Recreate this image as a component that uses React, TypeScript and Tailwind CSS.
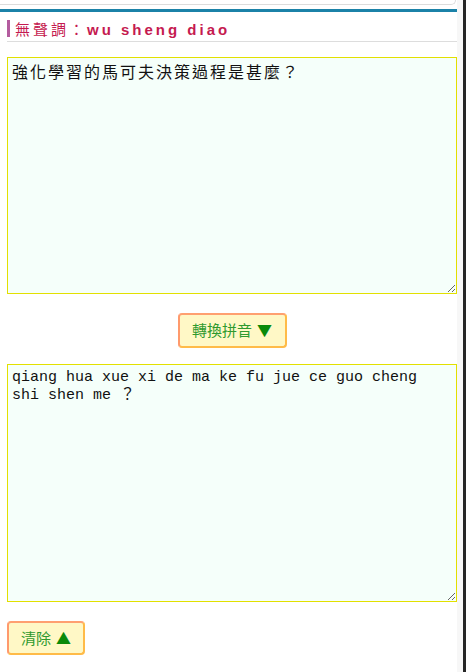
import { useState } from 'react';

const CJK = '"Noto Sans CJK TC", "Noto Sans", sans-serif';

export default function App() {
  const [source, setSource] = useState('強化學習的馬可夫決策過程是甚麼？');
  const [pinyin, setPinyin] = useState('qiang hua xue xi de ma ke fu jue ce guo cheng shi shen me ？');

  return (
    <div className="w-[466px] h-[672px] flex bg-white overflow-hidden">
      <div className="w-[457px] flex flex-col">
        {/* end of the panel above */}
        <div className="h-[5px] w-[456px] border-b border-r border-[#dcdcdc] rounded-br-[6px]" />
        <div className="mt-[4px] h-[3px] bg-[#1b82a8]" />

        <div className="pl-[7px] flex flex-col items-start">
          <div className="mt-[8px] w-[450px] border-b border-[#dddddd] pb-[4px]">
            <div
              className="border-l-[3px] border-[#b45c9f] pl-[5px] h-[17px] leading-[17px] text-[15px] tracking-[3px] text-[#c51a50] whitespace-nowrap"
              style={{ fontFamily: CJK }}
            >
              無聲調：
              <span className="font-bold" style={{ fontFamily: '"Liberation Sans", Arial, sans-serif' }}>
                wu sheng diao
              </span>
            </div>
          </div>

          <textarea
            value={source}
            onChange={(e) => setSource(e.target.value)}
            className="mt-[15px] w-[450px] h-[237px] border border-[#e2e000] bg-[#f5fffa] px-[4px] pt-[4px] text-[16px] leading-[18px] tracking-[2px] text-[#111] outline-none"
            style={{ fontFamily: CJK }}
          />

          <div className="w-[450px] flex justify-center mt-[19px]">
            <button
              className="h-[35px] w-[109px] rounded-[4px] border-2 border-t-[#ffa070] border-l-[#ff9a6c] border-r-[#ffbb48] border-b-[#ffbb48] bg-[#fff8c6] text-[15px] text-[#2f9a2f] flex items-center justify-center"
              style={{ fontFamily: CJK }}
            >
              轉換拼音 <span className="ml-[5px] text-[#0a8a0a]">▼</span>
            </button>
          </div>

          <textarea
            value={pinyin}
            onChange={(e) => setPinyin(e.target.value)}
            className="mt-[16px] w-[450px] h-[238px] border border-[#e2e000] bg-[#f5fffa] px-[4px] pt-[4px] text-[15px] leading-[18px] text-[#111] outline-none"
            style={{ fontFamily: '"Liberation Mono", "Noto Sans CJK TC", monospace' }}
          />

          <button
            onClick={() => setPinyin('')}
            className="mt-[19px] h-[34px] w-[78px] rounded-[4px] border-2 border-t-[#ffa070] border-l-[#ff9a6c] border-r-[#ffbb48] border-b-[#ffbb48] bg-[#fff8c6] text-[15px] text-[#2f9a2f] flex items-center justify-center"
            style={{ fontFamily: CJK }}
          >
            清除 <span className="ml-[5px] text-[#0a8a0a]">▲</span>
          </button>
        </div>
      </div>
      <div className="w-[6px] bg-[#f7f7f7]" />
      <div className="w-[3px] bg-[#262626]" />
    </div>
  );
}
